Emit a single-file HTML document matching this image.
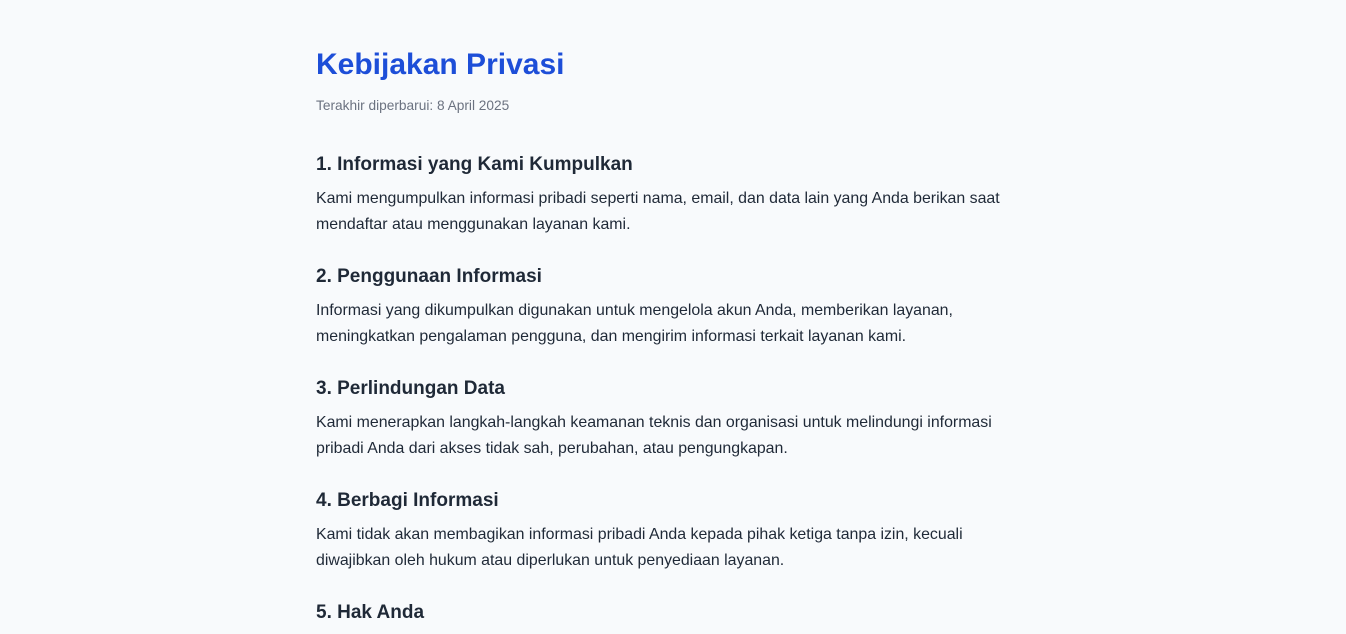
<!DOCTYPE html>
<html><head><meta charset="utf-8"><style>
html,body{margin:0;padding:0;background:#f8fafc;width:1346px;height:625px;overflow:hidden}
body{font-family:"Liberation Sans",sans-serif;color:#1f2937}
.c{position:absolute;left:316px;top:0;width:720px}
h1{position:absolute;top:48px;margin:0;font-size:30px;font-weight:bold;color:#1d4ed8;white-space:nowrap}
.sub{position:absolute;top:98px;font-size:13.7px;color:#6b7280;white-space:nowrap}
.s{position:absolute;left:0;white-space:nowrap}
.s h2{margin:0;font-size:19px;font-weight:bold;height:34px;line-height:26px;color:#1f2937}
.s p{margin:0;font-size:15.9px;line-height:26px;color:#1f2937}
</style></head><body><div class="c">
<h1>Kebijakan Privasi</h1>
<div class="sub">Terakhir diperbarui: 8 April 2025</div>
<div class="s" style="top:152px"><h2>1. Informasi yang Kami Kumpulkan</h2><p>Kami mengumpulkan informasi pribadi seperti nama, email, dan data lain yang Anda berikan saat<br>mendaftar atau menggunakan layanan kami.</p></div>
<div class="s" style="top:264px"><h2>2. Penggunaan Informasi</h2><p>Informasi yang dikumpulkan digunakan untuk mengelola akun Anda, memberikan layanan,<br>meningkatkan pengalaman pengguna, dan mengirim informasi terkait layanan kami.</p></div>
<div class="s" style="top:376px"><h2>3. Perlindungan Data</h2><p>Kami menerapkan langkah-langkah keamanan teknis dan organisasi untuk melindungi informasi<br>pribadi Anda dari akses tidak sah, perubahan, atau pengungkapan.</p></div>
<div class="s" style="top:488px"><h2>4. Berbagi Informasi</h2><p>Kami tidak akan membagikan informasi pribadi Anda kepada pihak ketiga tanpa izin, kecuali<br>diwajibkan oleh hukum atau diperlukan untuk penyediaan layanan.</p></div>
<div class="s" style="top:600px"><h2>5. Hak Anda</h2></div>
</div></body></html>
